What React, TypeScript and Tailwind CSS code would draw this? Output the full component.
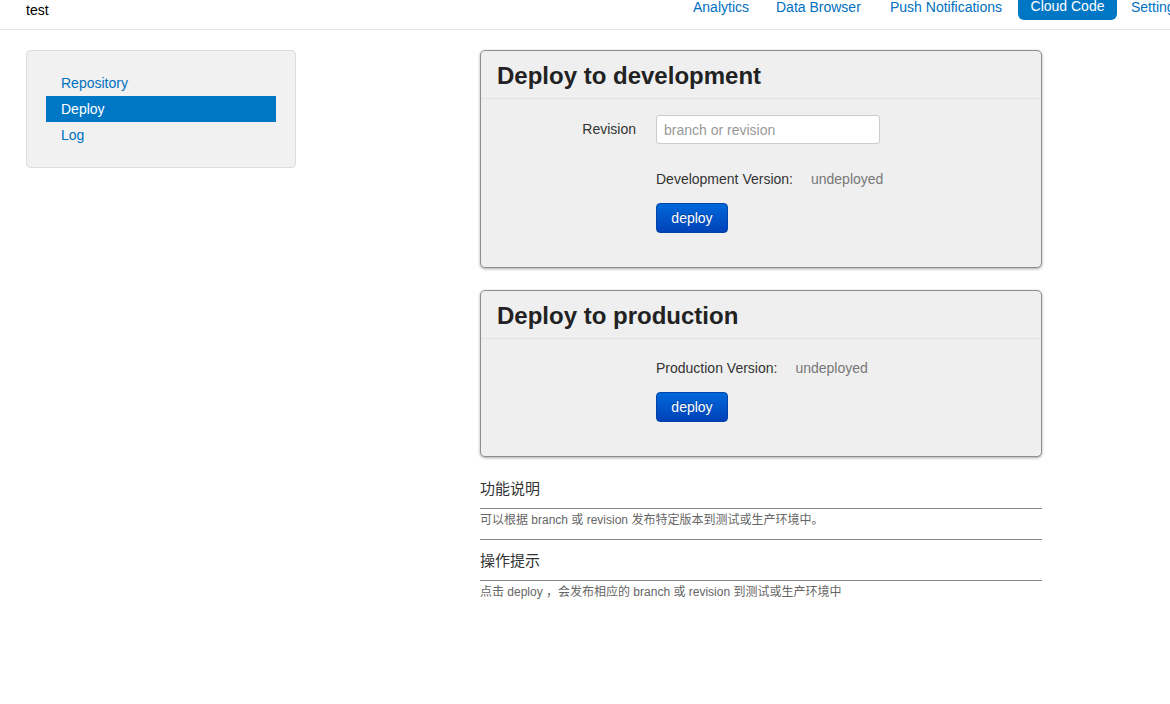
const FONT = "font-['Liberation_Sans','Noto_Sans_CJK_SC',sans-serif]";

const NAV = [
  { n: "Analytics", w: "w-[83px]" },
  { n: "Data Browser", w: "w-[114px]" },
  { n: "Push Notifications", w: "w-[140px]" },
  { n: "Cloud Code", w: "w-[99px]" },
  { n: "Settings", w: "w-[80px]" },
];
const SIDE = ["Repository", "Deploy", "Log"];

function TopBar() {
  return (
    <header className="grid h-[30px] grid-cols-[681px_1fr] border-b border-[#e5e5e5]">
      <div className="pl-[26px] text-[14px] leading-[20px] text-black">test</div>
      <nav className="flex whitespace-nowrap">
        {NAV.map(({ n, w }) =>
          n === "Cloud Code" ? (
            <span key={n} className={`${w} -mt-[10px] mr-0.5 h-[30px] shrink-0 rounded-b-md bg-[#0077c5] pt-[6px] text-center text-[14px] leading-[20px] text-white`}>
              {n}
            </span>
          ) : (
            <span key={n} className={`${w} -mt-[3px] shrink-0 pl-3 text-[14px] leading-[20px] text-[#0070c0]`}>
              {n}
            </span>
          )
        )}
      </nav>
    </header>
  );
}

function Sidebar() {
  return (
    <aside className="w-[270px] rounded border border-[#dcdcdc] bg-[#f1f1f1] px-[19px] pt-[19px] pb-[19px]">
      {SIDE.map((s) => (
        <div
          key={s}
          className={
            s === "Deploy"
              ? "h-[26px] bg-[#0077c5] px-[15px] text-[14px] leading-[26px] text-white"
              : "h-[26px] px-[15px] text-[14px] leading-[26px] text-[#0070c0]"
          }
        >
          {s}
        </div>
      ))}
    </aside>
  );
}

function DeployButton() {
  return (
    <button className="h-[30px] w-[72px] rounded-[4px] border border-[#0044a8] bg-gradient-to-b from-[#0068da] to-[#0042b8] text-[14px] text-white [text-shadow:0_-1px_0_rgba(0,0,0,0.3)]">
      deploy
    </button>
  );
}

function Panel({ title, children }: { title: string; children: React.ReactNode }) {
  return (
    <section className="rounded-[5px] border border-[#8e8e8e] bg-[#efefef] shadow-[0_1px_3px_rgba(0,0,0,0.35)]">
      <h2 className="h-[48px] border-b border-[#e2e2e2] pt-[2px] pl-4 text-[24px] font-bold leading-[45px] text-[#222]">{title}</h2>
      {children}
    </section>
  );
}

function VersionRow({ label }: { label: string }) {
  return (
    <div className="flex gap-[18px] text-[14px] leading-[20px]">
      <span className="text-[#333]">{label}</span>
      <span className="text-[#777]">undeployed</span>
    </div>
  );
}

export default function App() {
  return (
    <div className={`${FONT} h-[704px] w-[1170px] overflow-hidden bg-white`}>
      <TopBar />
      <div className="mt-5 flex">
        <div className="ml-[26px]">
          <Sidebar />
        </div>
        <main className="ml-[184px] w-[562px]">
          <Panel title="Deploy to development">
            <div className="grid grid-cols-[155px_1fr] gap-x-5 pt-4 pb-[34px]">
              <label className="text-right text-[14px] leading-[29px] text-[#333]">Revision</label>
              <input
                placeholder="branch or revision"
                className="h-[29px] w-[224px] rounded-[3px] border border-[#ccc] bg-white px-[7px] text-[14px] placeholder:text-[#999]"
              />
              <div className="col-start-2 mt-[25px]">
                <VersionRow label="Development Version:" />
              </div>
              <div className="col-start-2 mt-[14px]">
                <DeployButton />
              </div>
            </div>
          </Panel>

          <div className="mt-[22px]">
            <Panel title="Deploy to production">
              <div className="grid grid-cols-[155px_1fr] gap-x-5 pt-[19px] pb-[34px]">
                <div className="col-start-2">
                  <VersionRow label="Production Version:" />
                </div>
                <div className="col-start-2 mt-[14px]">
                  <DeployButton />
                </div>
              </div>
            </Panel>
          </div>

          <div className="mt-[22px]">
            <h3 className="border-b border-[#888] pb-[9px] text-[15px] leading-[20px] text-[#333]">功能说明</h3>
            <p className="border-b border-[#888] pt-[2px] pb-[10px] text-[12px] leading-[18px] text-[#666]">
              可以根据 branch 或 revision 发布特定版本到测试或生产环境中。
            </p>
          </div>
          <div className="mt-[11px]">
            <h3 className="border-b border-[#888] pb-[9px] text-[15px] leading-[20px] text-[#333]">操作提示</h3>
            <p className="pt-[2px] text-[12px] leading-[18px] text-[#666]">点击 deploy ，会发布相应的 branch 或 revision 到测试或生产环境中</p>
          </div>
        </main>
      </div>
    </div>
  );
}
